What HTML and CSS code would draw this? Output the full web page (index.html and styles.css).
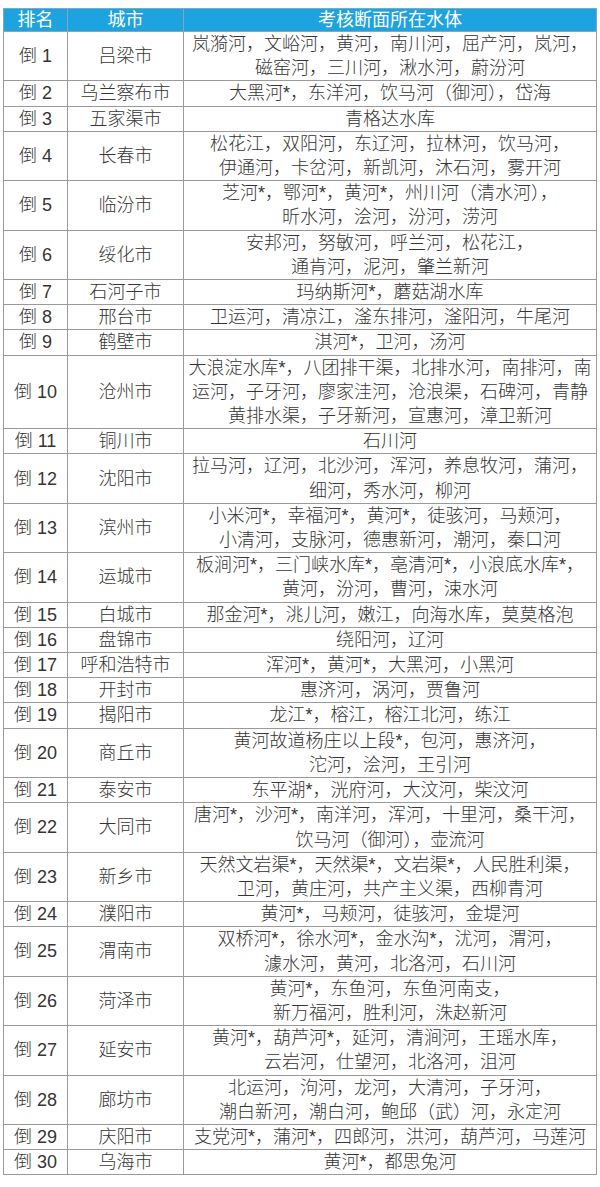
FILE: index.html
```html
<!DOCTYPE html>
<html lang="zh-CN">
<head>
<meta charset="utf-8">
<title>考核断面所在水体</title>
<link rel="stylesheet" href="styles.css">
</head>
<body>
<table class="rank">
<colgroup><col class="c1"><col class="c2"><col class="c3"></colgroup>
<thead>
<tr><th>排名</th><th>城市</th><th>考核断面所在水体</th></tr>
</thead>
<tbody>
<tr><td>倒 1</td><td>吕梁市</td><td>岚漪河，文峪河，黄河，南川河，屈产河，岚河，<br>磁窑河，三川河，湫水河，蔚汾河</td></tr>
<tr><td>倒 2</td><td>乌兰察布市</td><td>大黑河*，东洋河，饮马河（御河），岱海</td></tr>
<tr><td>倒 3</td><td>五家渠市</td><td>青格达水库</td></tr>
<tr><td>倒 4</td><td>长春市</td><td>松花江，双阳河，东辽河，拉林河，饮马河，<br>伊通河，卡岔河，新凯河，沐石河，雾开河</td></tr>
<tr><td>倒 5</td><td>临汾市</td><td>芝河*，鄂河*，黄河*，州川河（清水河），<br>昕水河，浍河，汾河，涝河</td></tr>
<tr><td>倒 6</td><td>绥化市</td><td>安邦河，努敏河，呼兰河，松花江，<br>通肯河，泥河，肇兰新河</td></tr>
<tr><td>倒 7</td><td>石河子市</td><td>玛纳斯河*，蘑菇湖水库</td></tr>
<tr><td>倒 8</td><td>邢台市</td><td>卫运河，清凉江，滏东排河，滏阳河，牛尾河</td></tr>
<tr><td>倒 9</td><td>鹤壁市</td><td>淇河*，卫河，汤河</td></tr>
<tr><td>倒 10</td><td>沧州市</td><td>大浪淀水库*，八团排干渠，北排水河，南排河，南<br>运河，子牙河，廖家洼河，沧浪渠，石碑河，青静<br>黄排水渠，子牙新河，宣惠河，漳卫新河</td></tr>
<tr><td>倒 11</td><td>铜川市</td><td>石川河</td></tr>
<tr><td>倒 12</td><td>沈阳市</td><td>拉马河，辽河，北沙河，浑河，养息牧河，蒲河，<br>细河，秀水河，柳河</td></tr>
<tr><td>倒 13</td><td>滨州市</td><td>小米河*，幸福河*，黄河*，徒骇河，马颊河，<br>小清河，支脉河，德惠新河，潮河，秦口河</td></tr>
<tr><td>倒 14</td><td>运城市</td><td>板涧河*，三门峡水库*，亳清河*，小浪底水库*，<br>黄河，汾河，曹河，涑水河</td></tr>
<tr><td>倒 15</td><td>白城市</td><td>那金河*，洮儿河，嫩江，向海水库，莫莫格泡</td></tr>
<tr><td>倒 16</td><td>盘锦市</td><td>绕阳河，辽河</td></tr>
<tr><td>倒 17</td><td>呼和浩特市</td><td>浑河*，黄河*，大黑河，小黑河</td></tr>
<tr><td>倒 18</td><td>开封市</td><td>惠济河，涡河，贾鲁河</td></tr>
<tr><td>倒 19</td><td>揭阳市</td><td>龙江*，榕江，榕江北河，练江</td></tr>
<tr><td>倒 20</td><td>商丘市</td><td>黄河故道杨庄以上段*，包河，惠济河，<br>沱河，浍河，王引河</td></tr>
<tr><td>倒 21</td><td>泰安市</td><td>东平湖*，洸府河，大汶河，柴汶河</td></tr>
<tr><td>倒 22</td><td>大同市</td><td>唐河*，沙河*，南洋河，浑河，十里河，桑干河，<br>饮马河（御河），壶流河</td></tr>
<tr><td>倒 23</td><td>新乡市</td><td>天然文岩渠*，天然渠*，文岩渠*，人民胜利渠，<br>卫河，黄庄河，共产主义渠，西柳青河</td></tr>
<tr><td>倒 24</td><td>濮阳市</td><td>黄河*，马颊河，徒骇河，金堤河</td></tr>
<tr><td>倒 25</td><td>渭南市</td><td>双桥河*，徐水河*，金水沟*，沋河，渭河，<br>澽水河，黄河，北洛河，石川河</td></tr>
<tr><td>倒 26</td><td>菏泽市</td><td>黄河*，东鱼河，东鱼河南支，<br>新万福河，胜利河，洙赵新河</td></tr>
<tr><td>倒 27</td><td>延安市</td><td>黄河*，葫芦河*，延河，清涧河，王瑶水库，<br>云岩河，仕望河，北洛河，沮河</td></tr>
<tr><td>倒 28</td><td>廊坊市</td><td>北运河，泃河，龙河，大清河，子牙河，<br>潮白新河，潮白河，鲍邱（武）河，永定河</td></tr>
<tr><td>倒 29</td><td>庆阳市</td><td>支党河*，蒲河*，四郎河，洪河，葫芦河，马莲河</td></tr>
<tr><td>倒 30</td><td>乌海市</td><td>黄河*，都思兔河</td></tr>
</tbody>
</table>
</body>
</html>
```
FILE: styles.css
```css
html, body {
  margin: 0;
  padding: 0;
  background: #ffffff;
}
body {
  font-family: "Liberation Sans", "Noto Sans CJK SC", sans-serif;
  color: #353535;
}
.rank {
  margin: 8px 0 0 3px;
  width: 593px;
  border-collapse: collapse;
  table-layout: fixed;
}
.c1 { width: 64px; }
.c2 { width: 116px; }
.c3 { width: 413px; }
.rank th,
.rank td {
  border: 1px solid #9a9a9a;
  padding: 0;
  text-align: center;
  vertical-align: middle;
  font-size: 18px;
  font-weight: 300;
  white-space: nowrap;
}
.rank th {
  background: #1ea3e1;
  color: #ffffff;
  font-weight: normal;
  line-height: 22px;
  border-color: #7fa9bf;
}
.rank td {
  line-height: 24.2px;
}
```
